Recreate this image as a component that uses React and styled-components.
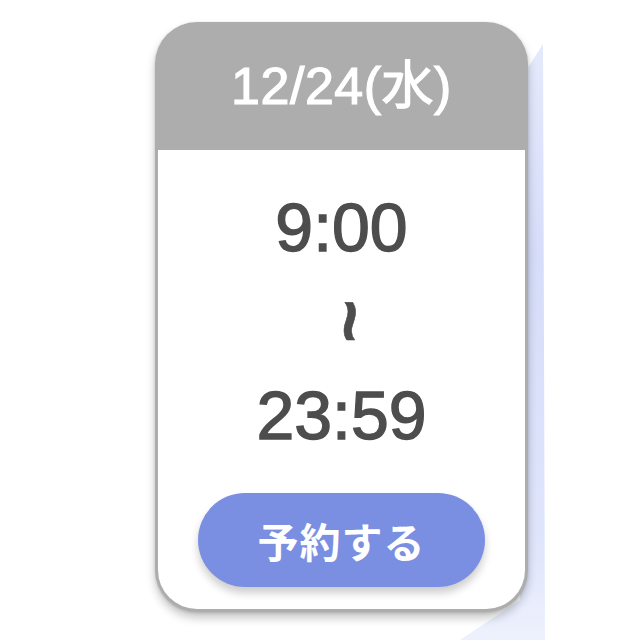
import React from 'react';
import styled, { createGlobalStyle } from 'styled-components';

const GlobalStyle = createGlobalStyle`
  html, body {
    margin: 0;
    padding: 0;
    background: #ffffff;
  }
  body {
    font-family: "Liberation Sans", "Noto Sans CJK JP", sans-serif;
  }
`;

const Page = styled.div`
  position: relative;
  width: 640px;
  height: 640px;
  overflow: hidden;
  background: #ffffff;
  padding: 22px 0 0 155px;
  box-sizing: border-box;
`;

// decorative panel peeking out from behind the card
const Backdrop = styled.div`
  position: absolute;
  left: 400px;
  top: 0;
  width: 145px;
  height: 640px;
  background: linear-gradient(180deg, #e8ecfc 0%, #d6ddf9 40%, #dfe5fb 85%, #eef1fd 100%);
  clip-path: polygon(143px 44px, 145px 640px, 60px 640px, 120px 600px, 120px 80px);
  z-index: 0;
`;

const Card = styled.div`
  position: relative;
  z-index: 1;
  width: 373px;
  height: 590px;
  box-sizing: border-box;
  background: #adadad;
  border-radius: 42px;
  padding: 0 3px 3px;
  display: flex;
  flex-direction: column;
  box-shadow: 0 6px 10px rgba(0, 0, 0, 0.22), 0 1px 3px rgba(0, 0, 0, 0.15);
`;

const Header = styled.div`
  height: 128px;
  flex-shrink: 0;
  display: flex;
  align-items: center;
  justify-content: center;
`;

const DateLabel = styled.div`
  color: #ffffff;
  font-size: 52px;
  line-height: 1;
  letter-spacing: 0.5px;
  -webkit-text-stroke: 1.2px #ffffff;
`;

const Body = styled.div`
  flex: 1;
  background: #ffffff;
  border-radius: 0 0 39px 39px;
  display: flex;
  flex-direction: column;
  align-items: center;
  padding-top: 43px;
`;

const Time = styled.div`
  color: #4d4d4d;
  font-size: 68px;
  line-height: 68px;
  height: 68px;
  -webkit-text-stroke: 1.4px #4d4d4d;
`;

const WaveRow = styled.div`
  height: 120px;
  display: flex;
  align-items: center;
  justify-content: center;
`;

const Wave = styled.span`
  display: inline-block;
  color: #4d4d4d;
  font-family: "Liberation Sans", sans-serif;
  font-weight: 700;
  font-size: 74px;
  line-height: 1;
  -webkit-text-stroke: 0.6px #4d4d4d;
  transform: rotate(90deg) translate(0, -8px);
`;

const ReserveButton = styled.button`
  margin-top: 44px;
  width: 287px;
  height: 94px;
  border: none;
  border-radius: 47px;
  background: #7a8fe1;
  color: #ffffff;
  font-family: "Noto Sans CJK JP", sans-serif;
  font-weight: 700;
  font-size: 41px;
  letter-spacing: 1px;
  box-shadow: 0 6px 8px rgba(0, 0, 0, 0.2);
  cursor: pointer;
`;

export default function App() {
  return (
    <>
      <GlobalStyle />
      <Page>
        <Backdrop />
        <Card>
          <Header>
            <DateLabel>12/24(水)</DateLabel>
          </Header>
          <Body>
            <Time>9:00</Time>
            <WaveRow>
              <Wave>~</Wave>
            </WaveRow>
            <Time>23:59</Time>
            <ReserveButton>予約する</ReserveButton>
          </Body>
        </Card>
      </Page>
    </>
  );
}
